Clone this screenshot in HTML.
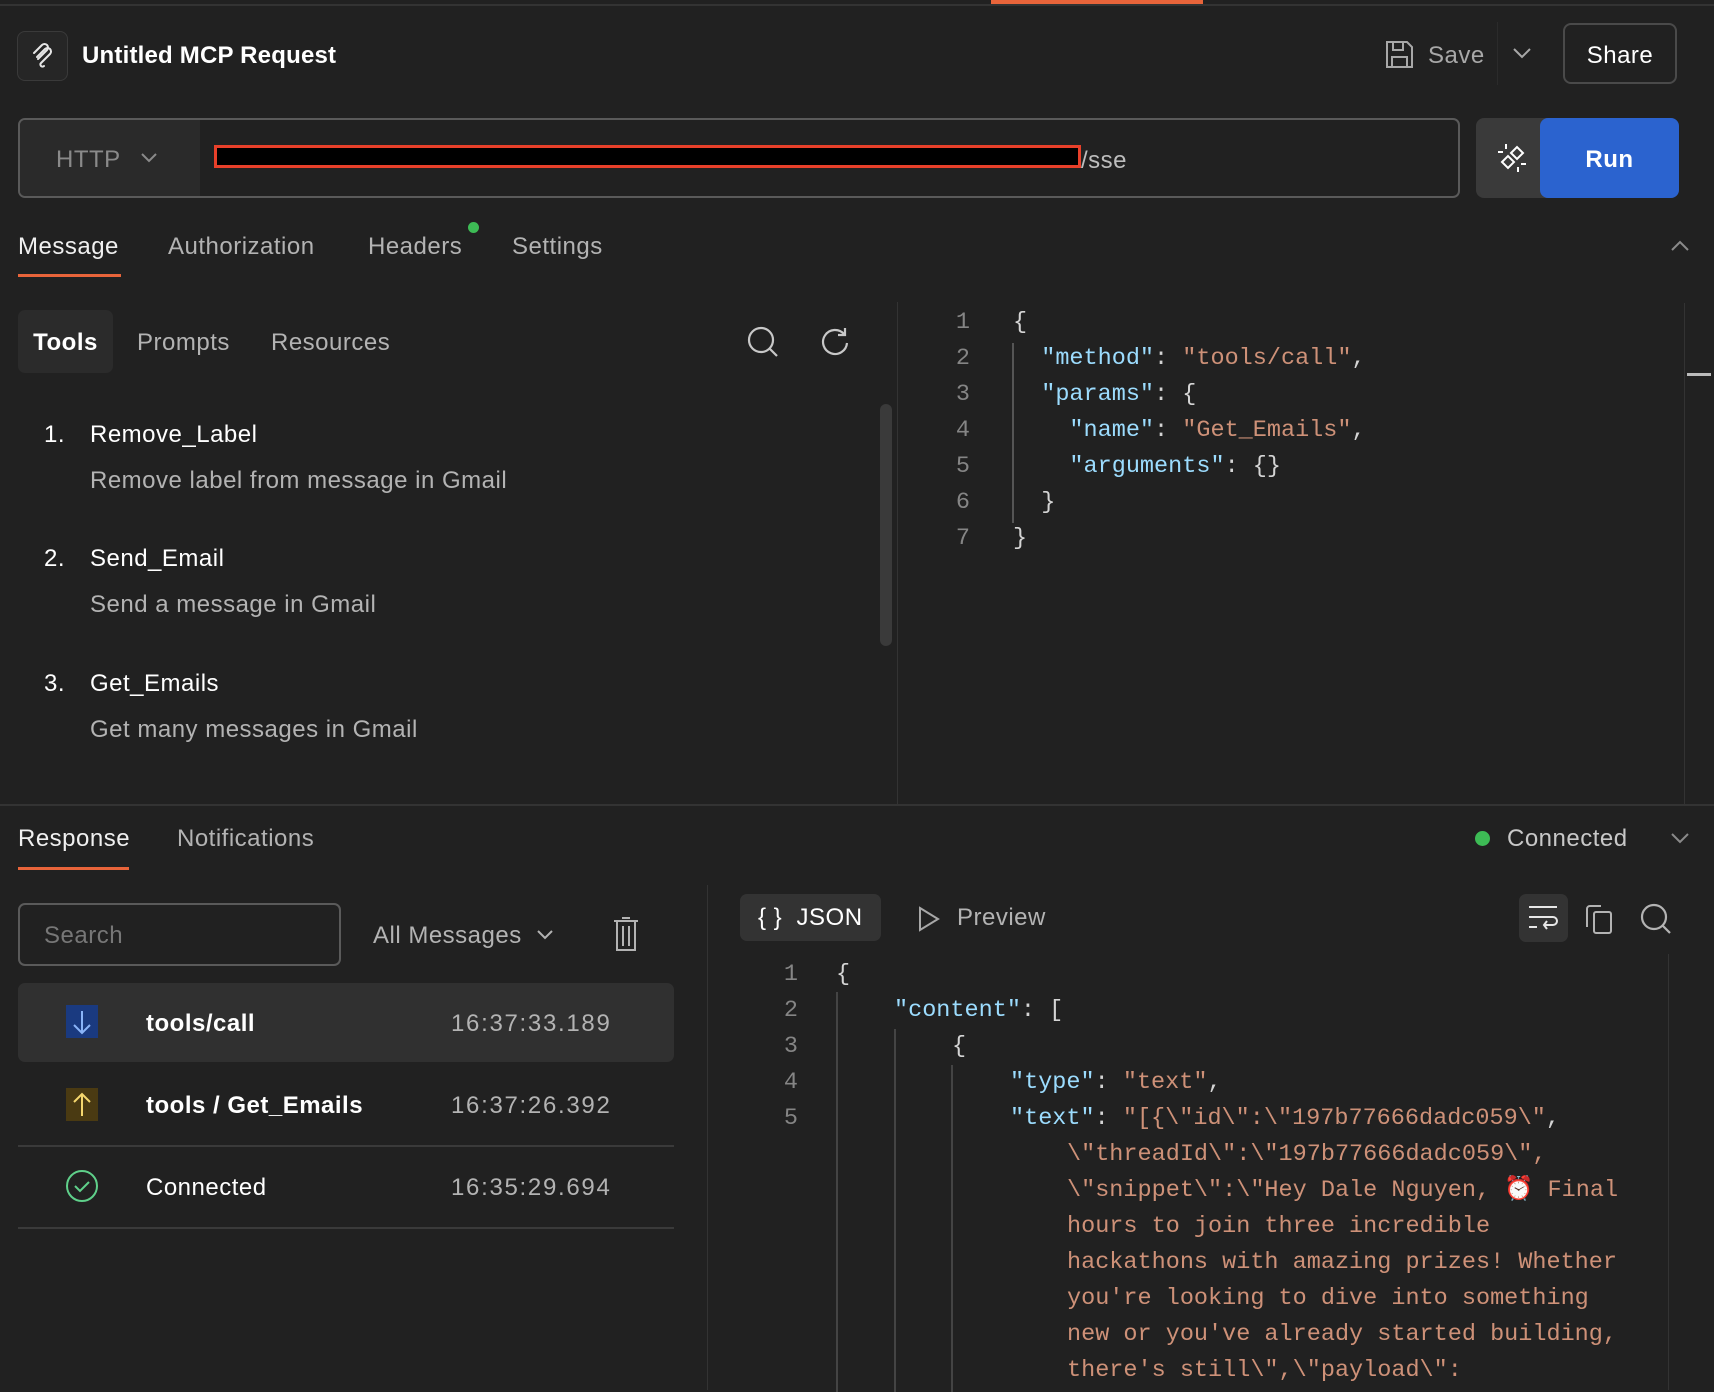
<!DOCTYPE html>
<html><head><meta charset="utf-8"><style>
body{margin:0;width:1714px;height:1390px;background:#212121;overflow:hidden;position:relative;font-family:"Liberation Sans",sans-serif;color:#e6e6e6}
.a{position:absolute}
.t{position:absolute;white-space:pre;line-height:34px;letter-spacing:0.5px}
.tm{letter-spacing:1.7px}
.m{position:absolute;white-space:pre;font-family:"Liberation Mono",monospace;font-size:23.5px;line-height:36px;color:#d4d4d4}
.k{color:#9cdcfe}.s{color:#ce9178}
.ln{position:absolute;font-family:"Liberation Mono",monospace;font-size:23.5px;line-height:36px;color:#858585;text-align:right;width:40px}
.g{color:#b3b3b3}
</style></head><body>
<div class="a" style="left:0;top:4px;width:1714px;height:2px;background:#333"></div>
<div class="a" style="left:991px;top:0;width:212px;height:4px;background:#e8643a"></div>

<div class="a" style="left:17px;top:31px;width:49px;height:48px;border:1px solid #3a3a3a;border-radius:8px;background:#262626"></div>
<svg class="a" style="left:28px;top:41px" width="28" height="28" viewBox="0 0 28 28" fill="none" stroke="#e6e6e6" stroke-width="2" stroke-linecap="round"><path d="M6 12 L14 4 a3 3 0 0 1 5 5 L10 18"/><path d="M9 16 L17 8 a3 3 0 0 1 5 5 L13 22 a2 2 0 0 0 3 3"/></svg>
<div class="t" style="left:82px;top:39px;font-size:24px;font-weight:bold;color:#fff;letter-spacing:0.2px">Untitled MCP Request</div>

<svg class="a" style="left:1385px;top:40px" width="29" height="29" viewBox="0 0 29 29" fill="none" stroke="#a8a8a8" stroke-width="2"><path d="M2 2h20l5 5v20H2z"/><path d="M8 2v8h10V2"/><path d="M7 27v-10h15v10"/></svg>
<div class="t" style="left:1428px;top:39px;font-size:24px;color:#a8a8a8">Save</div>
<div class="a" style="left:1497px;top:22px;width:1px;height:63px;background:#2b2b2b"></div>
<svg class="a" style="left:1512px;top:46px" width="20" height="14" viewBox="0 0 20 14" fill="none" stroke="#a8a8a8" stroke-width="2"><path d="M2 3l8 8 8-8"/></svg>
<div class="a" style="left:1563px;top:23px;width:114px;height:61px;border:2px solid #4a4a4a;border-radius:8px;box-sizing:border-box"></div>
<div class="t" style="left:1563px;top:39px;width:114px;text-align:center;font-size:24px;color:#fff">Share</div>

<div class="a" style="left:18px;top:118px;width:1442px;height:80px;border:2px solid #5a5a5a;border-radius:7px;box-sizing:border-box;overflow:hidden"><div class="a" style="left:0;top:0;width:180px;height:80px;background:#2a2a2a"></div></div>
<div class="t" style="left:56px;top:143px;font-size:24px;color:#8a8a8a">HTTP</div>
<svg class="a" style="left:140px;top:152px" width="18" height="12" viewBox="0 0 18 12" fill="none" stroke="#8a8a8a" stroke-width="2"><path d="M2 2l7 7 7-7"/></svg>
<div class="a" style="left:214px;top:145px;width:867px;height:23px;background:#000;border:3px solid #e8402a;box-sizing:border-box"></div>
<div class="t" style="left:1081px;top:144px;font-size:24px;color:#bdbdbd">/sse</div>
<div class="a" style="left:1476px;top:118px;width:80px;height:80px;background:#3a3a3a;border-radius:8px"></div>
<svg class="a" style="left:1497px;top:143px" width="30" height="30" viewBox="0 0 30 30" fill="none" stroke="#fff" stroke-width="2"><path d="M14 10l6-6 6 6-6 6z"/><path d="M5 19l6-6 6 6-6 6z"/><path d="M9 1v5M1 9h5M21 29v-5M29 21h-5"/></svg>
<div class="a" style="left:1540px;top:118px;width:139px;height:80px;background:#2b63cf;border-radius:8px"></div>
<div class="t" style="left:1540px;top:143px;width:139px;text-align:center;font-size:24px;font-weight:bold;color:#fff">Run</div>

<div class="t" style="left:18px;top:230px;font-size:24px;color:#f0f0f0">Message</div>
<div class="t g" style="left:168px;top:230px;font-size:24px">Authorization</div>
<div class="t g" style="left:368px;top:230px;font-size:24px">Headers</div>
<div class="a" style="left:468px;top:222px;width:11px;height:11px;border-radius:50%;background:#3dbb55"></div>
<div class="t g" style="left:512px;top:230px;font-size:24px">Settings</div>
<div class="a" style="left:18px;top:274px;width:103px;height:3px;background:#e8643a"></div>
<svg class="a" style="left:1670px;top:239px" width="20" height="13" viewBox="0 0 20 13" fill="none" stroke="#8a8a8a" stroke-width="2"><path d="M2 11l8-8 8 8"/></svg>

<div class="a" style="left:18px;top:310px;width:95px;height:63px;background:#2b2b2b;border-radius:7px"></div>
<div class="t" style="left:18px;top:326px;width:95px;text-align:center;font-size:24px;font-weight:bold;color:#fff">Tools</div>
<div class="t g" style="left:137px;top:326px;font-size:24px">Prompts</div>
<div class="t g" style="left:271px;top:326px;font-size:24px">Resources</div>
<svg class="a" style="left:747px;top:326px" width="32" height="32" viewBox="0 0 32 32" fill="none" stroke="#c8c8c8" stroke-width="2.2"><circle cx="14" cy="14" r="12"/><path d="M23 23l7 7"/></svg>
<svg class="a" style="left:820px;top:326px" width="30" height="30" viewBox="0 0 30 30" fill="none" stroke="#c8c8c8" stroke-width="2.2"><path d="M24 8A12 12 0 1 0 27 17"/><path d="M25 2v7h-7"/></svg>
<div class="a" style="left:880px;top:404px;width:12px;height:242px;background:#3a3a3a;border-radius:6px"></div>
<div class="a" style="left:897px;top:302px;width:1px;height:503px;background:#333"></div>

<div class="t" style="left:44px;top:418px;font-size:24px;color:#fff">1.</div>
<div class="t" style="left:90px;top:418px;font-size:24px;color:#fff">Remove_Label</div>
<div class="t g" style="left:90px;top:464px;font-size:24px">Remove label from message in Gmail</div>
<div class="t" style="left:44px;top:542px;font-size:24px;color:#fff">2.</div>
<div class="t" style="left:90px;top:542px;font-size:24px;color:#fff">Send_Email</div>
<div class="t g" style="left:90px;top:588px;font-size:24px">Send a message in Gmail</div>
<div class="t" style="left:44px;top:667px;font-size:24px;color:#fff">3.</div>
<div class="t" style="left:90px;top:667px;font-size:24px;color:#fff">Get_Emails</div>
<div class="t g" style="left:90px;top:713px;font-size:24px">Get many messages in Gmail</div>

<div class="ln" style="left:930px;top:305px">1<br>2<br>3<br>4<br>5<br>6<br>7</div>
<div class="a" style="left:1012px;top:343px;width:2px;height:180px;background:#555"></div>
<div class="m" style="left:1013px;top:305px">{
  <span class="k">"method"</span>: <span class="s">"tools/call"</span>,
  <span class="k">"params"</span>: {
    <span class="k">"name"</span>: <span class="s">"Get_Emails"</span>,
    <span class="k">"arguments"</span>: {}
  }
}</div>
<div class="a" style="left:1684px;top:303px;width:1px;height:502px;background:#333"></div>
<div class="a" style="left:1687px;top:373px;width:24px;height:3px;background:#bbb"></div>

<div class="a" style="left:0;top:804px;width:1714px;height:2px;background:#333"></div>
<div class="t" style="left:18px;top:822px;font-size:24px;color:#f0f0f0">Response</div>
<div class="t g" style="left:177px;top:822px;font-size:24px">Notifications</div>
<div class="a" style="left:18px;top:867px;width:111px;height:3px;background:#e8643a"></div>
<div class="a" style="left:1475px;top:831px;width:15px;height:15px;border-radius:50%;background:#3dbb55"></div>
<div class="t" style="left:1507px;top:822px;font-size:24px;color:#c8c8c8">Connected</div>
<svg class="a" style="left:1670px;top:832px" width="20" height="13" viewBox="0 0 20 13" fill="none" stroke="#8a8a8a" stroke-width="2"><path d="M2 2l8 8 8-8"/></svg>

<div class="a" style="left:18px;top:903px;width:323px;height:63px;border:2px solid #5a5a5a;border-radius:7px;box-sizing:border-box"></div>
<div class="t" style="left:44px;top:919px;font-size:24px;color:#777">Search</div>
<div class="t g" style="left:373px;top:919px;font-size:24px">All Messages</div>
<svg class="a" style="left:536px;top:929px" width="18" height="12" viewBox="0 0 18 12" fill="none" stroke="#b3b3b3" stroke-width="2"><path d="M2 2l7 7 7-7"/></svg>
<svg class="a" style="left:613px;top:916px" width="26" height="36" viewBox="0 0 26 36" fill="none" stroke="#b3b3b3" stroke-width="2"><path d="M1 5h24M9 2h8M4 5v29h18V5M10 10v20M16 10v20"/></svg>
<div class="a" style="left:707px;top:885px;width:1px;height:505px;background:#333"></div>

<div class="a" style="left:18px;top:983px;width:656px;height:79px;background:#303030;border-radius:7px"></div>
<div class="a" style="left:66px;top:1005px;width:32px;height:33px;background:#1a3a80"></div>
<svg class="a" style="left:66px;top:1005px" width="32" height="33" viewBox="0 0 32 33" fill="none" stroke="#8ab4f8" stroke-width="2"><path d="M16 6v22M8 20l8 8 8-8"/></svg>
<div class="t" style="left:146px;top:1007px;font-size:24px;font-weight:bold;color:#fff">tools/call</div>
<div class="t g tm" style="left:451px;top:1007px;font-size:24px">16:37:33.189</div>
<div class="a" style="left:66px;top:1088px;width:32px;height:33px;background:#4a3a12"></div>
<svg class="a" style="left:66px;top:1088px" width="32" height="33" viewBox="0 0 32 33" fill="none" stroke="#f5d76e" stroke-width="2"><path d="M16 28V6M8 14l8-8 8 8"/></svg>
<div class="t" style="left:146px;top:1089px;font-size:24px;font-weight:bold;color:#fff">tools / Get_Emails</div>
<div class="t g tm" style="left:451px;top:1089px;font-size:24px">16:37:26.392</div>
<div class="a" style="left:18px;top:1145px;width:656px;height:2px;background:#3a3a3a"></div>
<svg class="a" style="left:65px;top:1169px" width="34" height="34" viewBox="0 0 34 34" fill="none" stroke="#5fd08a" stroke-width="2"><circle cx="17" cy="17" r="15"/><path d="M10 17l5 5 9-9"/></svg>
<div class="t" style="left:146px;top:1171px;font-size:24px;color:#fff">Connected</div>
<div class="t g tm" style="left:451px;top:1171px;font-size:24px">16:35:29.694</div>
<div class="a" style="left:18px;top:1227px;width:656px;height:2px;background:#3a3a3a"></div>

<div class="a" style="left:740px;top:894px;width:141px;height:47px;background:#333;border-radius:7px"></div>
<div class="t" style="left:758px;top:901px;font-size:24px;color:#fff">{ }  JSON</div>
<svg class="a" style="left:918px;top:906px" width="22" height="26" viewBox="0 0 22 26" fill="none" stroke="#a8a8a8" stroke-width="2"><path d="M2 2l18 11L2 24z"/></svg>
<div class="t g" style="left:957px;top:901px;font-size:24px">Preview</div>
<div class="a" style="left:1519px;top:894px;width:49px;height:48px;background:#333;border-radius:7px"></div>
<svg class="a" style="left:1528px;top:904px" width="30" height="28" viewBox="0 0 30 28" fill="none" stroke="#e6e6e6" stroke-width="2"><path d="M1 3h28M1 13h24a4 4 0 0 1 0 8h-9M19 17l-3 4 3 4M1 23h8"/></svg>
<svg class="a" style="left:1585px;top:903px" width="30" height="32" viewBox="0 0 30 32" fill="none" stroke="#b3b3b3" stroke-width="2"><path d="M16 3H5a3 3 0 0 0-3 3v18"/><rect x="9" y="9" width="17" height="21" rx="2"/></svg>
<svg class="a" style="left:1640px;top:903px" width="32" height="32" viewBox="0 0 32 32" fill="none" stroke="#b3b3b3" stroke-width="2.2"><circle cx="14" cy="14" r="12"/><path d="M23 23l7 7"/></svg>

<div class="ln" style="left:758px;top:957px">1<br>2<br>3<br>4<br>5</div>
<div class="a" style="left:836px;top:992px;width:2px;height:400px;background:#444"></div>
<div class="a" style="left:894px;top:1029px;width:2px;height:363px;background:#444"></div>
<div class="a" style="left:951px;top:1065px;width:2px;height:327px;background:#444"></div>
<div class="m" style="left:836px;top:957px">{</div>
<div class="m" style="left:894px;top:993px"><span class="k">"content"</span>: [</div>
<div class="m" style="left:952px;top:1029px">{</div>
<div class="m" style="left:1010px;top:1065px"><span class="k">"type"</span>: <span class="s">"text"</span>,</div>
<div class="m" style="left:1010px;top:1101px"><span class="k">"text"</span>: <span class="s">"[{\"id\":\"197b77666dadc059\"</span>,</div>
<div class="m s" style="left:1067px;top:1137px">\"threadId\":\"197b77666dadc059\",</div>
<div class="m s" style="left:1067px;top:1173px">\"snippet\":\"Hey Dale Nguyen, ⏰ Final</div>
<div class="m s" style="left:1067px;top:1209px">hours to join three incredible</div>
<div class="m s" style="left:1067px;top:1245px">hackathons with amazing prizes! Whether</div>
<div class="m s" style="left:1067px;top:1281px">you're looking to dive into something</div>
<div class="m s" style="left:1067px;top:1317px">new or you've already started building,</div>
<div class="m s" style="left:1067px;top:1353px">there's still\",\"payload\":</div>
<div class="a" style="left:1668px;top:954px;width:1px;height:436px;background:#333"></div>
</body></html>
